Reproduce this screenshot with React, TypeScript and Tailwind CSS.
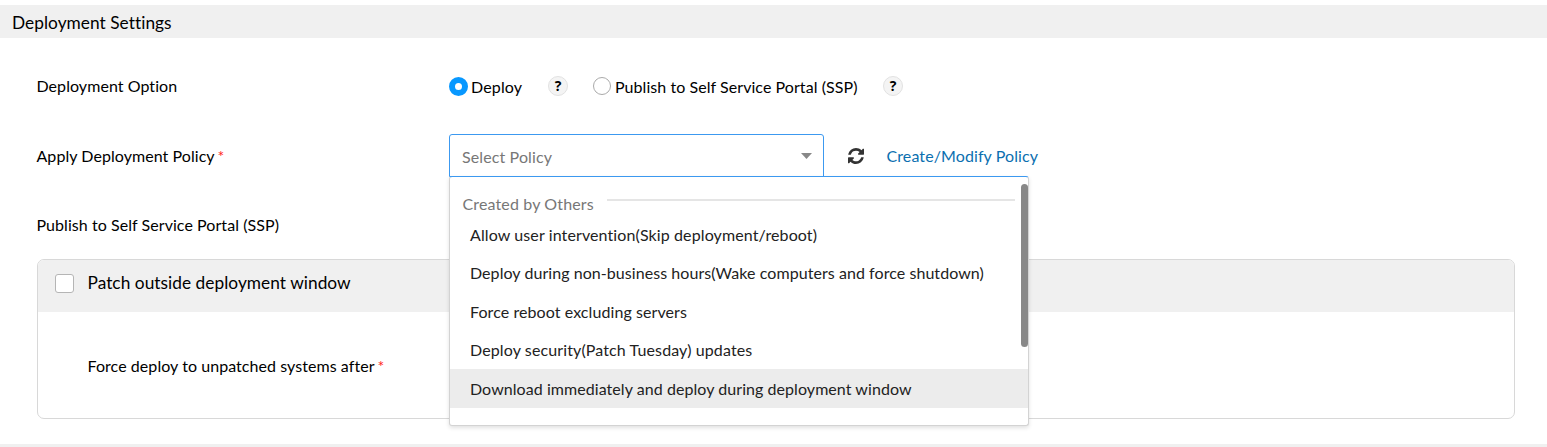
const policies = [
  { name: "Allow user intervention(Skip deployment/reboot)", tracking: "tracking-[0.11px]" },
  { name: "Deploy during non-business hours(Wake computers and force shutdown)", tracking: "tracking-[0.06px]" },
  { name: "Force reboot excluding servers", tracking: "tracking-[0.08px]" },
  { name: "Deploy security(Patch Tuesday) updates", tracking: "tracking-[0.12px]" },
  { name: "Download immediately and deploy during deployment window", tracking: "tracking-[0.06px]" },
];

function Help() {
  return (
    <span className="flex size-5 items-center justify-center rounded-full border border-[#e2e2e2] bg-[#f4f4f4] font-['Open_Sans',sans-serif] text-[14px] leading-none font-bold text-black">
      ?
    </span>
  );
}

function Required() {
  return <span className="-ml-px text-[16px] text-[#f22]">*</span>;
}

function RefreshIcon() {
  return (
    <svg className="ml-[24px] size-4" viewBox="0 0 1536 1536" fill="#333">
      <path d="M1511 928q0 5-1 7-64 268-268 434.5t-478 166.5q-146 0-282.5-55t-243.5-157l-129 129q-19 19-45 19t-45-19-19-45v-448q0-26 19-45t45-19h448q26 0 45 19t19 45-19 45l-137 137q71 66 161 102t187 36q134 0 250-65t186-179q11-17 53-117 8-23 30-23h192q13 0 22.5 9.5t9.5 22.5zm25-800v448q0 26-19 45t-45 19h-448q-26 0-45-19t-19-45 19-45l138-138q-148-137-349-137-134 0-250 65t-186 179q-11 17-53 117-8 23-30 23h-199q-13 0-22.5-9.5t-9.5-22.5v-7q65-268 270-434.5t480-166.5q146 0 284 55.5t245 156.5l130-129q19-19 45-19t45 19 19 45z" />
    </svg>
  );
}

function PolicyMenu() {
  return (
    <div className="absolute top-[42px] left-0 z-10 flex h-[250px] w-[580px] flex-col overflow-hidden rounded-[3px] border border-[#d3d3d3] border-t-[#3c99f0] bg-white text-[#222] shadow-[0_2px_4px_rgba(0,0,0,0.12)]">
      <div className="flex h-[38px] shrink-0 items-center pt-[16px] pr-[13px] pl-[12.5px] text-[#777]">
        <span className="tracking-[0.14px] whitespace-nowrap">Created by Others</span>
        <span className="-mt-[8px] ml-[13px] h-[2px] flex-1 bg-[#e5e5e5]" />
      </div>
      {policies.map(({ name, tracking }, i) => (
        <div
          key={name}
          className={`flex h-[38.5px] shrink-0 items-center pt-px pl-5 whitespace-nowrap ${tracking} ${i === 4 ? "bg-[#ececec]" : ""}`}
        >
          {name}
        </div>
      ))}
      <span className="absolute top-[7px] right-0 h-[163px] w-[7px] rounded-full bg-[#888]" />
    </div>
  );
}

export default function App() {
  return (
    <div className="h-[447px] overflow-hidden bg-white pt-[5px] font-[Lato,sans-serif] text-[16px] leading-5 tracking-[0.06px] text-black [font-variant-ligatures:none]">
      <h1 className="flex h-[33px] items-center bg-[#f0f0f0] pt-[2px] pl-3 text-[17.3px] tracking-[0.04px]">Deployment Settings</h1>

      <div className="flex h-24 items-center pl-[36.5px]">
        <span className="w-[412.5px]">Deployment Option</span>
        <div className="flex items-center">
          <span className="size-[19px] rounded-full border-[6px] border-[#0898ff] bg-white" />
          <span className="ml-[3px] w-[77px] pt-[2px] tracking-[0.15px]">Deploy</span>
          <Help />
          <span className="ml-[25px] size-[18px] rounded-full border border-[#aaa] bg-white" />
          <span className="ml-[4px] w-[268px] pt-[2px]">Publish to Self Service Portal (SSP)</span>
          <Help />
        </div>
      </div>

      <div className="flex h-[43px] items-center pl-[36.5px]">
        <span className="w-[412.5px] pt-px">
          Apply Deployment Policy <Required />
        </span>
        <div className="relative flex h-[43px] w-[375px] items-center justify-between rounded-t-[3px] border border-[#3c99f0] bg-white pt-[3px] pr-[11.5px] pl-3 text-[#777]">
          <span className="tracking-[0.12px]">Select Policy</span>
          <svg className="-mt-[3px] h-[6px] w-[11px]" viewBox="0 0 11 6" fill="#888">
            <path d="M0 0h11L5.5 6z" />
          </svg>
          <div className="absolute -top-px -left-px">
            <PolicyMenu />
          </div>
        </div>
        <RefreshIcon />
        <a className="ml-[22.5px] tracking-[0.1px] text-[#0b6fb0]">Create/Modify Policy</a>
      </div>

      <div className="flex h-[82px] items-center pt-[13px] pl-[36.5px]">Publish to Self Service Portal (SSP)</div>

      <section className="mr-8 ml-[37px] h-[160px] overflow-hidden rounded-[7px] border border-[#d8d8d8]">
        <header className="flex h-[52px] items-center bg-[#f0f0f0] pl-[17px] text-[17.3px] tracking-[0.04px]">
          <span className="mt-[-5px] mr-[13.5px] size-[19px] rounded-[3px] border border-[#b5b5b5] bg-white" />
          <span className="-mt-[7px]">Patch outside deployment window</span>
        </header>
        <div className="flex h-[106px] items-center pl-[49.5px]">
          <span className="pt-[2px]">
            Force deploy to unpatched systems after <Required />
          </span>
        </div>
      </section>
      <div className="mt-[25px] h-[3px] bg-[#f0f0f0]" />
    </div>
  );
}
